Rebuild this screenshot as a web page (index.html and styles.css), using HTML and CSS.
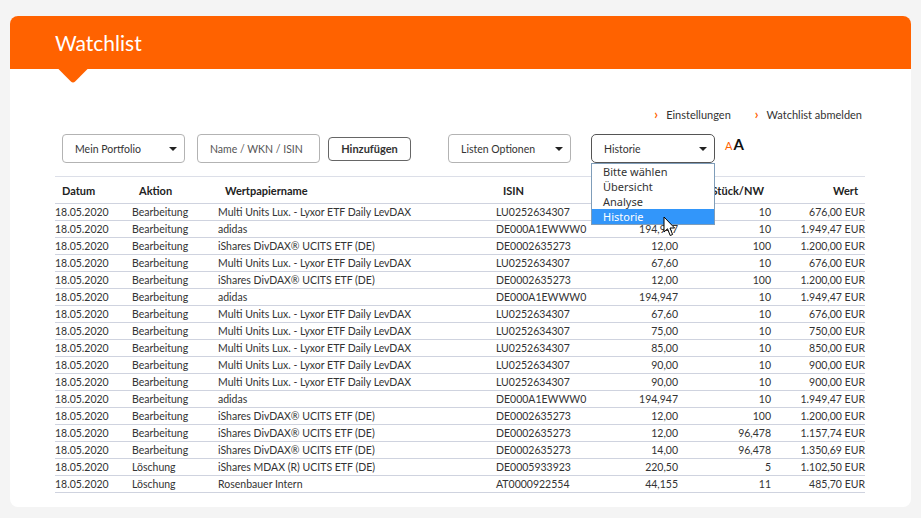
FILE: index.html
```html
<!DOCTYPE html>
<html lang="de">
<head>
<meta charset="utf-8">
<title>Watchlist</title>
<link rel="stylesheet" href="styles.css">
</head>
<body>
<div class="card">
  <div class="card-header"><h1 class="title">Watchlist</h1></div>
  <div class="card-body">
    <div class="links">
      <a class="link" href="#"><span class="chev">›</span>Einstellungen</a>
      <a class="link" href="#"><span class="chev">›</span>Watchlist abmelden</a>
    </div>
    <div class="controls">
      <div class="select sel-portfolio"><span>Mein Portfolio</span><span class="caret"></span></div>
      <div class="input">Name / WKN / ISIN</div>
      <button class="btn">Hinzufügen</button>
      <div class="select sel-listen"><span>Listen Optionen</span><span class="caret"></span></div>
      <div class="select-wrap">
        <div class="select sel-focus"><span>Historie</span><span class="caret"></span></div>
        <ul class="dropdown">
          <li>Bitte wählen</li>
          <li>Übersicht</li>
          <li>Analyse</li>
          <li class="active">Historie</li>
        </ul>
        <svg class="cursor" width="14" height="22" viewBox="0 0 14 22"><path d="M1 1 L1 16 L4.5 12.8 L7.2 19.5 L9.6 18.5 L7 12 L11.6 12 Z" fill="#fff" stroke="#000" stroke-width="1" stroke-linejoin="miter"/></svg>
      </div>
      <div class="fontsize"><span class="a-small">A</span><span class="a-big">A</span></div>
    </div>
    <table class="grid">
      <colgroup>
        <col class="c-date"><col class="c-akt"><col class="c-name"><col class="c-isin"><col class="c-kurs"><col class="c-st"><col class="c-wert">
      </colgroup>
      <thead>
        <tr><th>Datum</th><th>Aktion</th><th>Wertpapiername</th><th>ISIN</th><th class="r"></th><th class="r">Stück/NW</th><th class="r">Wert</th></tr>
      </thead>
      <tbody>
        <tr><td>18.05.2020</td><td>Bearbeitung</td><td>Multi Units Lux. - Lyxor ETF Daily LevDAX</td><td>LU0252634307</td><td class="r">67,60</td><td class="r">10</td><td class="r">676,00 EUR</td></tr>
        <tr><td>18.05.2020</td><td>Bearbeitung</td><td>adidas</td><td>DE000A1EWWW0</td><td class="r">194,947</td><td class="r">10</td><td class="r">1.949,47 EUR</td></tr>
        <tr><td>18.05.2020</td><td>Bearbeitung</td><td>iShares DivDAX® UCITS ETF (DE)</td><td>DE0002635273</td><td class="r">12,00</td><td class="r">100</td><td class="r">1.200,00 EUR</td></tr>
        <tr><td>18.05.2020</td><td>Bearbeitung</td><td>Multi Units Lux. - Lyxor ETF Daily LevDAX</td><td>LU0252634307</td><td class="r">67,60</td><td class="r">10</td><td class="r">676,00 EUR</td></tr>
        <tr><td>18.05.2020</td><td>Bearbeitung</td><td>iShares DivDAX® UCITS ETF (DE)</td><td>DE0002635273</td><td class="r">12,00</td><td class="r">100</td><td class="r">1.200,00 EUR</td></tr>
        <tr><td>18.05.2020</td><td>Bearbeitung</td><td>adidas</td><td>DE000A1EWWW0</td><td class="r">194,947</td><td class="r">10</td><td class="r">1.949,47 EUR</td></tr>
        <tr><td>18.05.2020</td><td>Bearbeitung</td><td>Multi Units Lux. - Lyxor ETF Daily LevDAX</td><td>LU0252634307</td><td class="r">67,60</td><td class="r">10</td><td class="r">676,00 EUR</td></tr>
        <tr><td>18.05.2020</td><td>Bearbeitung</td><td>Multi Units Lux. - Lyxor ETF Daily LevDAX</td><td>LU0252634307</td><td class="r">75,00</td><td class="r">10</td><td class="r">750,00 EUR</td></tr>
        <tr><td>18.05.2020</td><td>Bearbeitung</td><td>Multi Units Lux. - Lyxor ETF Daily LevDAX</td><td>LU0252634307</td><td class="r">85,00</td><td class="r">10</td><td class="r">850,00 EUR</td></tr>
        <tr><td>18.05.2020</td><td>Bearbeitung</td><td>Multi Units Lux. - Lyxor ETF Daily LevDAX</td><td>LU0252634307</td><td class="r">90,00</td><td class="r">10</td><td class="r">900,00 EUR</td></tr>
        <tr><td>18.05.2020</td><td>Bearbeitung</td><td>Multi Units Lux. - Lyxor ETF Daily LevDAX</td><td>LU0252634307</td><td class="r">90,00</td><td class="r">10</td><td class="r">900,00 EUR</td></tr>
        <tr><td>18.05.2020</td><td>Bearbeitung</td><td>adidas</td><td>DE000A1EWWW0</td><td class="r">194,947</td><td class="r">10</td><td class="r">1.949,47 EUR</td></tr>
        <tr><td>18.05.2020</td><td>Bearbeitung</td><td>iShares DivDAX® UCITS ETF (DE)</td><td>DE0002635273</td><td class="r">12,00</td><td class="r">100</td><td class="r">1.200,00 EUR</td></tr>
        <tr><td>18.05.2020</td><td>Bearbeitung</td><td>iShares DivDAX® UCITS ETF (DE)</td><td>DE0002635273</td><td class="r">12,00</td><td class="r">96,478</td><td class="r">1.157,74 EUR</td></tr>
        <tr><td>18.05.2020</td><td>Bearbeitung</td><td>iShares DivDAX® UCITS ETF (DE)</td><td>DE0002635273</td><td class="r">14,00</td><td class="r">96,478</td><td class="r">1.350,69 EUR</td></tr>
        <tr><td>18.05.2020</td><td>Löschung</td><td>iShares MDAX (R) UCITS ETF (DE)</td><td>DE0005933923</td><td class="r">220,50</td><td class="r">5</td><td class="r">1.102,50 EUR</td></tr>
        <tr><td>18.05.2020</td><td>Löschung</td><td>Rosenbauer Intern</td><td>AT0000922554</td><td class="r">44,155</td><td class="r">11</td><td class="r">485,70 EUR</td></tr>
      </tbody>
    </table>
  </div>
</div>
</body>
</html>
```

FILE: styles.css
```css
* { box-sizing: border-box; }
html, body { margin: 0; padding: 0; }
body {
  background: #f4f4f4;
  font-family: Lato, "Open Sans", "Liberation Sans", sans-serif;
  color: #333;
  font-size: 10.5px;
}
.card {
  margin: 16px 10px 0 10px;
  height: 491px;
  background: #fff;
  border-radius: 8px;
  position: relative;
  overflow: hidden;
}
.card-header {
  height: 53px;
  background: #ff6200;
  padding-left: 45px;
  display: flex;
  align-items: center;
  position: relative;
}
.card-header::after {
  content: "";
  position: absolute;
  left: 52px;
  top: 41px;
  width: 22px;
  height: 22px;
  background: #ff6200;
  transform: rotate(45deg);
  border-bottom-right-radius: 3px;
}
.title {
  margin: 0;
  font-weight: 400;
  font-size: 21px;
  color: #fff;
}
.card-body {
  padding: 0 46px 0 45px;
}
.links {
  display: flex;
  justify-content: flex-end;
  gap: 24px;
  margin-top: 35px;
  height: 20px;
  align-items: center;
  padding-right: 3px;
}
.link {
  color: #333;
  text-decoration: none;
  font-size: 11px;
}
.chev {
  color: #ff6200;
  font-weight: 700;
  margin-right: 8px;
  font-size: 13px;
}
.controls {
  display: flex;
  align-items: center;
  margin-top: 10px;
  padding-left: 7px;
  height: 29px;
}
.select, .input {
  width: 123px;
  height: 29px;
  border: 1px solid #b3b3b3;
  border-radius: 4px;
  display: flex;
  align-items: center;
  justify-content: space-between;
  padding: 0 7px 0 12px;
  background: #fff;
  color: #333;
  font-size: 10.5px;
}
.caret {
  width: 0;
  height: 0;
  border-left: 4px solid transparent;
  border-right: 4px solid transparent;
  border-top: 4px solid #222;
}
.input {
  margin-left: 12px;
  color: #555;
}
.btn {
  margin-left: 8px;
  width: 83px;
  height: 24px;
  border: 1px solid #666;
  border-radius: 4px;
  background: #fff;
  font-family: inherit;
  font-weight: 700;
  font-size: 11px;
  color: #333;
  padding: 0;
}
.sel-listen { margin-left: 37px; }
.select-wrap {
  margin-left: 20px;
  position: relative;
}
.sel-focus {
  width: 124px;
  border-color: #555;
  border-radius: 5px;
}
.dropdown {
  position: absolute;
  left: 0;
  top: 29px;
  width: 124px;
  margin: 0;
  padding: 0;
  list-style: none;
  background: #fff;
  border: 1px solid #7f9db9;
  z-index: 3;
  font-family: "Noto Sans", "Open Sans", sans-serif;
  font-size: 11px;
}
.dropdown li {
  height: 15px;
  line-height: 15px;
  padding-left: 11px;
  color: #333;
}
.dropdown li.active {
  background: #3296fa;
  color: #fff;
}
.cursor {
  position: absolute;
  left: 72px;
  top: 82px;
  z-index: 4;
}
.fontsize {
  margin-left: 10px;
  align-self: flex-start;
  margin-top: 1px;
  display: flex;
  align-items: baseline;
}
.a-small {
  color: #ff6200;
  font-size: 11px;
  margin-right: 1px;
}
.a-big {
  color: #111;
  font-size: 15px;
  font-weight: 700;
}
.grid {
  margin-top: 13px;
  width: 810px;
  border-collapse: collapse;
  table-layout: fixed;
}
.c-date { width: 77px; }
.c-akt { width: 86px; }
.c-name { width: 278px; }
.c-isin { width: 120px; }
.c-kurs { width: 62px; }
.c-st { width: 93px; }
.c-wert { width: 94px; }
.grid thead tr {
  border-top: 1px solid #dcdfe8;
  border-bottom: 1px solid #cfd3df;
}
.grid th {
  height: 27px;
  padding: 0 7px;
  text-align: left;
  font-weight: 700;
  color: #222;
  font-size: 11px;
}
.grid th.r { text-align: right; }
.grid td {
  height: 16px;
  padding: 0;
  line-height: 16px;
  white-space: nowrap;
  font-size: 10.5px;
}
.grid td.r { text-align: right; }
.grid tbody tr { border-bottom: 1px solid #cfd3df; }
```
